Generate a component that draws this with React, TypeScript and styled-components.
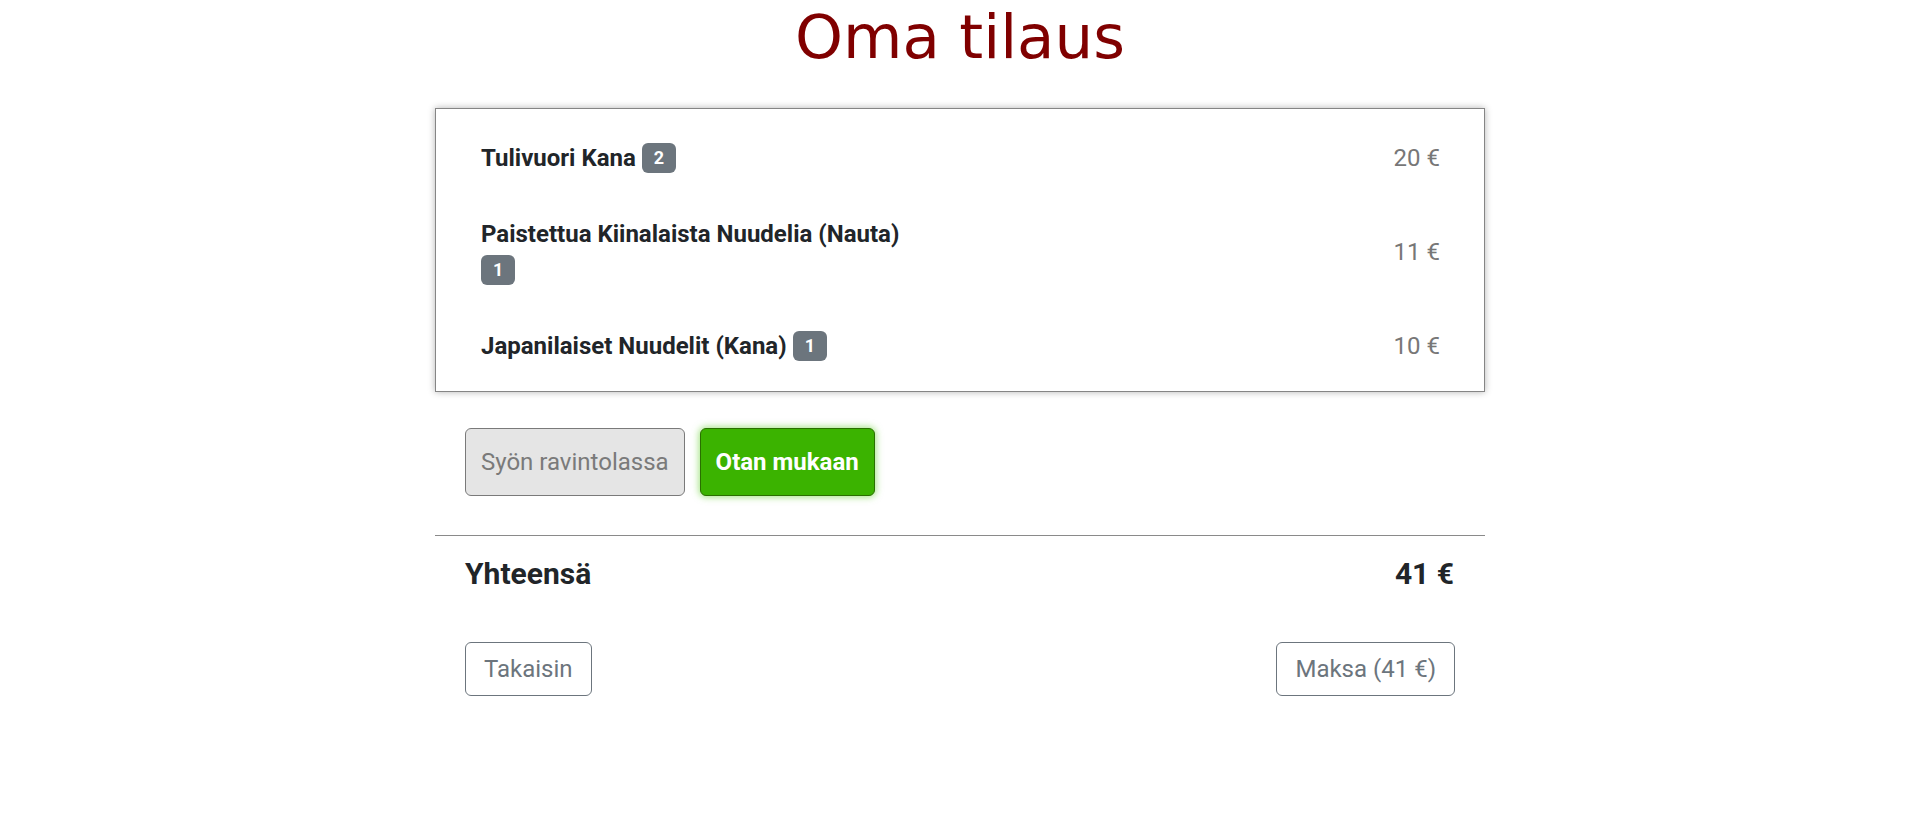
import React from "react";
import styled, { createGlobalStyle } from "styled-components";

const Global = createGlobalStyle`
  html, body { margin: 0; padding: 0; background: #fff; }
  body { font-family: Roboto, "Liberation Sans", Arial, sans-serif; color: #212529; }
  * { box-sizing: border-box; }
`;

const Page = styled.div`
  width: 1050px;
  margin: 0 auto;
  display: flex;
  flex-direction: column;
`;

const Title = styled.h1`
  margin: 1px 0 0;
  text-align: center;
  font-family: "DejaVu Sans", "Open Sans", sans-serif;
  font-weight: 400;
  font-size: 61px;
  line-height: 72px;
  color: #800000;
`;

const Card = styled.ul`
  list-style: none;
  margin: 35px 0 0;
  padding: 11px 44px 7px 45px;
  border: 1px solid #858585;
  box-shadow: 0 0 7px rgba(0, 0, 0, 0.3);
  background: #fff;
`;

const Item = styled.li`
  display: flex;
  justify-content: space-between;
  align-items: center;
  padding: 20px 0;
`;

const Name = styled.div`
  width: 438px;
  display: flex;
  flex-wrap: wrap;
  align-items: center;
  column-gap: 6px;
  font-size: 24px;
  font-weight: 700;
  line-height: 36px;
  color: #212529;
`;

const Badge = styled.span`
  display: inline-block;
  margin: 3px 0;
  padding: 6px 12px;
  border-radius: 6px;
  background: #6c757d;
  color: #fff;
  font-size: 18px;
  font-weight: 700;
  line-height: 18px;
  text-align: center;
`;

const Price = styled.div`
  font-size: 24px;
  color: #777;
`;

const Choices = styled.div`
  display: flex;
  gap: 15px;
  padding: 36px 30px 0;
`;

const ChoiceButton = styled.button<{ $active?: boolean }>`
  font-family: Roboto, sans-serif;
  font-size: 24px;
  line-height: 36px;
  padding: 15px;
  border-radius: 6px;
  border: 1px solid ${(p) => (p.$active ? "#2a6f00" : "#7a7a7a")};
  background: ${(p) => (p.$active ? "#3bb300" : "#e5e5e5")};
  color: ${(p) => (p.$active ? "#fff" : "#7a7a7a")};
  font-weight: ${(p) => (p.$active ? 700 : 400)};
  box-shadow: ${(p) => (p.$active ? "0 0 7px 1px rgba(80, 200, 20, 0.55)" : "none")};
`;

const Divider = styled.hr`
  margin: 39px 0 0;
  border: 0;
  border-top: 1px solid #8a8a8a;
`;

const TotalRow = styled.div`
  display: flex;
  justify-content: space-between;
  padding: 20px 31px 0 30px;
  font-size: 30px;
  font-weight: 700;
  line-height: 36px;
  color: #212529;
`;

const Actions = styled.div`
  display: flex;
  justify-content: space-between;
  padding: 50px 30px 0;
`;

const OutlineButton = styled.button`
  font-family: Roboto, sans-serif;
  font-size: 24px;
  line-height: 36px;
  padding: 8px 18px;
  border-radius: 6px;
  border: 1px solid #6c757d;
  background: #fff;
  color: #6c757d;
`;

const items = [
  { name: "Tulivuori Kana", qty: 2, price: 20 },
  { name: "Paistettua Kiinalaista Nuudelia (Nauta)", qty: 1, price: 11 },
  { name: "Japanilaiset Nuudelit (Kana)", qty: 1, price: 10 },
];

export default function App() {
  const total = items.reduce((s, i) => s + i.price, 0);
  return (
    <>
      <Global />
      <Page>
        <Title>Oma tilaus</Title>
        <Card>
          {items.map((it) => (
            <Item key={it.name}>
              <Name>
                <span>{it.name}</span>
                <Badge>{it.qty}</Badge>
              </Name>
              <Price>{it.price} €</Price>
            </Item>
          ))}
        </Card>
        <Choices>
          <ChoiceButton>Syön ravintolassa</ChoiceButton>
          <ChoiceButton $active>Otan mukaan</ChoiceButton>
        </Choices>
        <Divider />
        <TotalRow>
          <span>Yhteensä</span>
          <span>{total} €</span>
        </TotalRow>
        <Actions>
          <OutlineButton>Takaisin</OutlineButton>
          <OutlineButton>Maksa ({total} €)</OutlineButton>
        </Actions>
      </Page>
    </>
  );
}
